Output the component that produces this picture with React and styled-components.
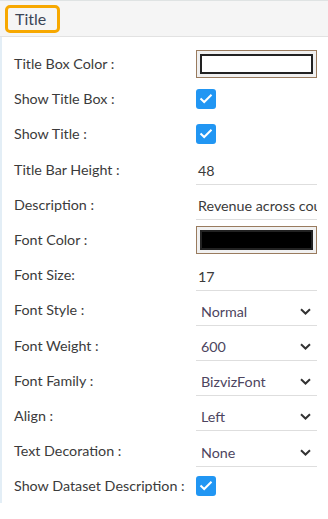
import styled, { createGlobalStyle } from "styled-components";

const Global = createGlobalStyle`
  body {
    margin: 0;
    background: #ffffff;
    font-family: Lato, "Open Sans", sans-serif;
  }
`;

const Panel = styled.div`
  width: 328px;
  height: 519px;
  overflow: hidden;
  background: #fff;
`;

const Header = styled.div`
  height: 35px;
  background: #f5f5f5;
  border-top: 1px solid #dfe3e3;
  border-bottom: 1px solid #e2e2e2;
  display: flex;
  align-items: center;
  padding-left: 5px;
`;

const TitleTag = styled.div`
  height: 22px;
  padding: 0 11px 0 7px;
  border: 3px solid #f7a800;
  border-radius: 5px;
  display: flex;
  align-items: center;
  font-size: 16px;
  color: #3b4656;
`;

const Body = styled.div`
  border-left: 2px solid #e3eef6;
  padding: 9px 11px 0 12px;
`;

const Row = styled.div`
  height: 35.2px;
  display: grid;
  grid-template-columns: 182px 1fr;
  align-items: center;
`;

const Label = styled.div`
  font-size: 14.3px;
  color: #3b3b3b;
  white-space: nowrap;
`;

const ColorBox = styled.div`
  width: 121px;
  height: 28px;
  border: 1px solid #997b5e;
  background: #f0f0f0;
  padding: 3px;
  box-sizing: border-box;
`;

const Swatch = styled.div`
  height: 100%;
  border: 2px solid #222;
  box-sizing: border-box;
  background: ${(p) => p.$color};
`;

const Check = styled.div`
  width: 20px;
  height: 20px;
  border-radius: 3px;
  background: #2196f3;
  display: flex;
  align-items: center;
  justify-content: center;
`;

const Field = styled.div`
  width: 121px;
  height: 28px;
  margin-top: 4px;
  border-bottom: 1px solid #dedede;
  display: flex;
  align-items: center;
  justify-content: space-between;
  padding-left: ${(p) => (p.$select ? "5px" : "2px")};
  padding-right: 6px;
  box-sizing: border-box;
  overflow: hidden;
  font-size: 14.3px;
  color: ${(p) => (p.$select ? "#4d4560" : "#3b3b3b")};
  white-space: nowrap;
`;

const TextField = styled(Field)`
  padding-right: 0;
  justify-content: flex-start;
`;

const Tick = () => (
  <svg width="14" height="11" viewBox="0 0 14 11">
    <path d="M1.5 5.5 L5.2 9 L12.5 1.8" fill="none" stroke="#fff" strokeWidth="2" />
  </svg>
);

const Chevron = () => (
  <svg width="11" height="7" viewBox="0 0 11 7">
    <path d="M1 1.2 L5.5 5.5 L10 1.2" fill="none" stroke="#333" strokeWidth="2" />
  </svg>
);

const rows = [
  { label: "Title Box Color :", type: "color", value: "#ffffff" },
  { label: "Show Title Box :", type: "check" },
  { label: "Show Title :", type: "check" },
  { label: "Title Bar Height :", type: "text", value: "48" },
  { label: "Description :", type: "text", value: "Revenue across countries" },
  { label: "Font Color :", type: "color", value: "#000000" },
  { label: "Font Size:", type: "text", value: "17" },
  { label: "Font Style :", type: "select", value: "Normal" },
  { label: "Font Weight :", type: "select", value: "600" },
  { label: "Font Family :", type: "select", value: "BizvizFont" },
  { label: "Align :", type: "select", value: "Left" },
  { label: "Text Decoration :", type: "select", value: "None" },
  { label: "Show Dataset Description :", type: "check" },
];

function Control({ row }) {
  if (row.type === "color")
    return (
      <ColorBox>
        <Swatch $color={row.value} />
      </ColorBox>
    );
  if (row.type === "check")
    return (
      <Check>
        <Tick />
      </Check>
    );
  if (row.type === "select")
    return (
      <Field $select>
        <span>{row.value}</span>
        <Chevron />
      </Field>
    );
  return <TextField>{row.value}</TextField>;
}

export default function App() {
  return (
    <Panel>
      <Global />
      <Header>
        <TitleTag>Title</TitleTag>
      </Header>
      <Body>
        {rows.map((r) => (
          <Row key={r.label}>
            <Label>{r.label}</Label>
            <Control row={r} />
          </Row>
        ))}
      </Body>
    </Panel>
  );
}
